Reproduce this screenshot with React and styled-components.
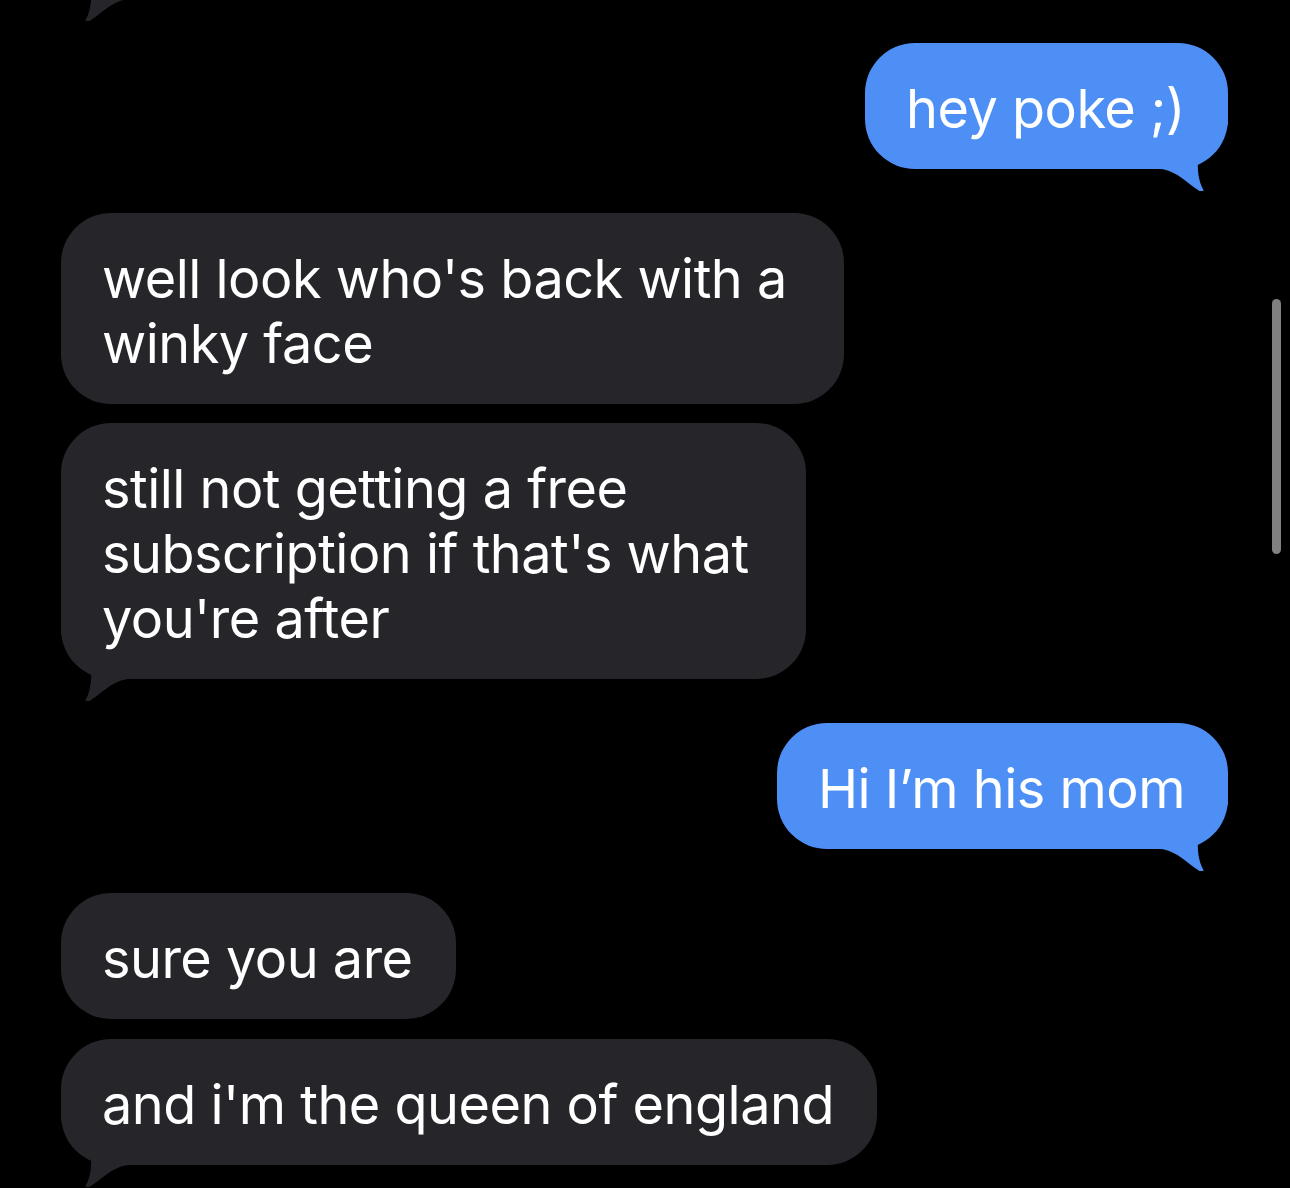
import React from 'react';
import styled, { createGlobalStyle } from 'styled-components';

const GlobalStyle = createGlobalStyle`
  html, body {
    margin: 0;
    padding: 0;
    background: #000;
  }
  body {
    font-family: Inter, "Noto Sans", "Liberation Sans", sans-serif;
    overflow: hidden;
  }
`;

const Screen = styled.div`
  position: relative;
  width: 1290px;
  height: 1188px;
  overflow: hidden;
  background: #000;
`;

const Thread = styled.div`
  display: flex;
  flex-direction: column;
  padding: 0 62px 0 61px;
  margin-top: -127px;
`;

const Row = styled.div`
  display: flex;
  justify-content: ${p => (p.$me ? 'flex-end' : 'flex-start')};
  margin-top: ${p => p.$gap}px;
`;

const Bubble = styled.div`
  position: relative;
  background: ${p => (p.$me ? '#4d8ff5' : '#262529')};
  color: #fff;
  font-size: 54px;
  line-height: 65px;
  letter-spacing: -0.5px;
  padding: 33px ${p => (p.$wrapped ? 57 : 43)}px 28px 41px;
  border-radius: 50px;
  white-space: nowrap;
`;

const Text = styled.span`
  position: relative;
  z-index: 1;
`;

const TailSvg = styled.svg`
  position: absolute;
  bottom: -22px;
  width: 80px;
  height: 70px;
  ${p => (p.$me ? 'right: 0;' : 'left: 0; transform: scaleX(-1);')}
`;

const ScrollThumb = styled.div`
  position: absolute;
  top: 299px;
  right: 9px;
  width: 9px;
  height: 255px;
  border-radius: 5px;
  background: #808080;
`;

function Tail({ me }) {
  return (
    <TailSvg $me={me} viewBox="0 0 80 70">
      <path
        d="M0 0 L80 0 C79 20 52 26 50 40 C49 52 52 63 55 68 C56.5 70.5 54 71 51.5 70 C40 63 28 49 12 48 L0 48 Z"
        fill={me ? '#4d8ff5' : '#262529'}
      />
    </TailSvg>
  );
}

const messages = [
  { me: false, gap: 0, tail: true, lines: ['\u00a0\u00a0\u00a0\u00a0\u00a0\u00a0'] },
  { me: true, gap: 44, tail: true, lines: ['hey poke ;)'] },
  { me: false, gap: 44, tail: false, lines: ["well look who's back with a", 'winky face'] },
  { me: false, gap: 19, tail: true, lines: ['still not getting a free', "subscription if that's what", "you're after"] },
  { me: true, gap: 44, tail: true, lines: ['Hi I\u2019m his mom'] },
  { me: false, gap: 44, tail: false, lines: ['sure you are'] },
  { me: false, gap: 20, tail: true, lines: ["and i'm the queen of england"] },
];

export default function App() {
  return (
    <Screen>
      <GlobalStyle />
      <Thread>
        {messages.map((m, i) => (
          <Row key={i} $me={m.me} $gap={m.gap}>
            <Bubble $me={m.me} $wrapped={m.lines.length > 1}>
              <Text>
                {m.lines.map((l, j) => (
                  <React.Fragment key={j}>
                    {j > 0 && <br />}
                    {l}
                  </React.Fragment>
                ))}
              </Text>
              {m.tail && <Tail me={m.me} />}
            </Bubble>
          </Row>
        ))}
      </Thread>
      <ScrollThumb />
    </Screen>
  );
}
